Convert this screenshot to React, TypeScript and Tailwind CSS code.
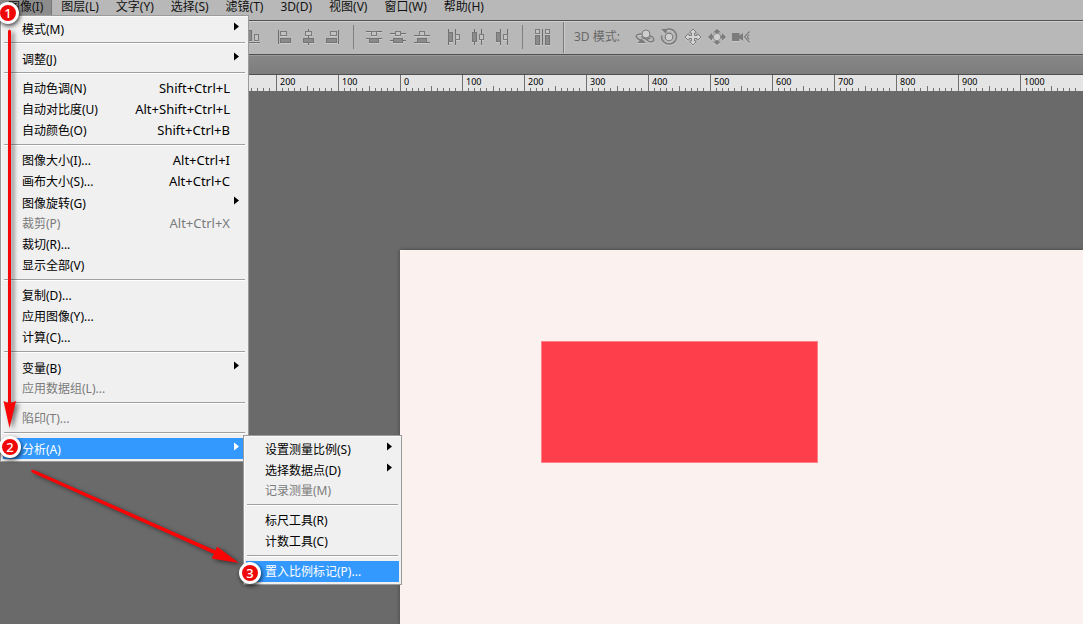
import React from "react";

const FONT = "font-['Noto_Sans','Noto_Sans_CJK_SC',sans-serif]";

type Entry = { label: string; keys?: string; sub?: boolean; off?: boolean; active?: boolean };

const imageMenu: Entry[][] = [
  [{ label: "模式(M)", sub: true }],
  [{ label: "调整(J)", sub: true }],
  [
    { label: "自动色调(N)", keys: "Shift+Ctrl+L" },
    { label: "自动对比度(U)", keys: "Alt+Shift+Ctrl+L" },
    { label: "自动颜色(O)", keys: "Shift+Ctrl+B" },
  ],
  [
    { label: "图像大小(I)...", keys: "Alt+Ctrl+I" },
    { label: "画布大小(S)...", keys: "Alt+Ctrl+C" },
    { label: "图像旋转(G)", sub: true },
    { label: "裁剪(P)", keys: "Alt+Ctrl+X", off: true },
    { label: "裁切(R)..." },
    { label: "显示全部(V)" },
  ],
  [{ label: "复制(D)..." }, { label: "应用图像(Y)..." }, { label: "计算(C)..." }],
  [{ label: "变量(B)", sub: true }, { label: "应用数据组(L)...", off: true }],
  [{ label: "陷印(T)...", off: true }],
  [{ label: "分析(A)", sub: true, active: true }],
];

const analysisMenu: Entry[][] = [
  [
    { label: "设置测量比例(S)", sub: true },
    { label: "选择数据点(D)", sub: true },
    { label: "记录测量(M)", off: true },
  ],
  [{ label: "标尺工具(R)" }, { label: "计数工具(C)" }],
  [{ label: "置入比例标记(P)...", active: true }],
];

function Menu({ groups, name, className }: { groups: Entry[][]; name: string; className: string }) {
  return (
    <div
      role="menu"
      aria-label={name}
      className={`absolute border border-[#9b9b9b] bg-[#f0f0f0] py-0.5 shadow-[inset_1px_1px_0_#fafafa] ${className}`}
    >
      {groups.map((group, g) => (
        <React.Fragment key={g}>
          {g > 0 && <div role="separator" className="mx-[3px] mt-[3px] mb-1 h-0.5 border-t border-[#a0a0a0] bg-white" />}
          {group.map((e) => (
            <button
              key={e.label}
              role="menuitem"
              disabled={e.off}
              className={`flex h-[21px] w-full items-center px-0.5 text-left ${
                e.active ? "text-white" : e.off ? "text-[#7b7b7b]" : "text-black"
              }`}
            >
              <span className={`flex h-full flex-1 items-center pr-[7px] pl-[19px] ${e.active ? "bg-[#3399ff]" : ""}`}>
                <span className={`flex-1 text-[12px] leading-[19px] whitespace-nowrap ${e.sub ? "pt-0.5" : ""}`}>
                  {e.label}
                </span>
                {e.keys && <span className="pr-[9px] text-[13px] leading-[19px] whitespace-nowrap">{e.keys}</span>}
                {e.sub && (
                  <svg className="mb-1 h-[9px] w-[5px]" viewBox="0 0 5 9" fill="currentColor">
                    <path d="M0 0.5 L5 4.5 L0 8.5Z" />
                  </svg>
                )}
              </span>
            </button>
          ))}
        </React.Fragment>
      ))}
    </div>
  );
}

type Rect = [number, number, number, number];

function AlignIcon({ name, hollow, solid, lines }: { name: string; hollow: Rect[]; solid: Rect[]; lines: Rect[] }) {
  return (
    <button aria-label={name} className="size-6 shrink-0">
      <svg viewBox="0 0 24 24" className="size-6 drop-shadow-[0_1px_0_rgba(255,255,255,0.25)]">
        {lines.map(([x, y, w, h], i) => (
          <rect key={i} x={x} y={y} width={w} height={h} fill="#6d6d6d" />
        ))}
        {solid.map(([x, y, w, h], i) => (
          <rect key={i} x={x + 0.5} y={y + 0.5} width={w - 1} height={h - 1} fill="#8b8b8b" stroke="#757575" />
        ))}
        {hollow.map(([x, y, w, h], i) => (
          <rect key={i} x={x + 0.5} y={y + 0.5} width={w - 1} height={h - 1} fill="#c2c2c2" stroke="#7b7b7b" />
        ))}
      </svg>
    </button>
  );
}

function ModeIcon({ name, children }: { name: string; children: React.ReactNode }) {
  return (
    <button aria-label={name} className="size-6 shrink-0">
      <svg
        viewBox="0 0 24 24"
        fill="none"
        stroke="#7c7c7c"
        strokeWidth="1.5"
        className="size-6 drop-shadow-[0_1px_0_rgba(255,255,255,0.25)]"
      >
        {children}
      </svg>
    </button>
  );
}

const Divider = () => <div className="h-6 w-px shrink-0 bg-[#7f7f7f]" />;

function Toolbar() {
  return (
    <div className="flex h-8 items-center overflow-hidden border-t border-[#d2d2d2] bg-[#b8b8b8] pb-px pl-60">
      <AlignIcon name="底对齐" solid={[[8, 5, 4, 11]]} hollow={[[14, 9, 5, 7]]} lines={[[4, 17, 16, 1]]} />
      <div className="ml-2 flex">
        <AlignIcon name="左对齐" lines={[[6, 5, 1, 14]]} hollow={[[8, 6, 7, 5]]} solid={[[8, 13, 11, 5]]} />
        <AlignIcon name="水平居中对齐" lines={[[12, 4, 1, 16]]} hollow={[[9, 6, 7, 5]]} solid={[[7, 13, 11, 5]]} />
        <AlignIcon name="右对齐" lines={[[18, 5, 1, 14]]} hollow={[[10, 6, 7, 5]]} solid={[[6, 13, 11, 5]]} />
      </div>
      <div className="flex items-center pr-2 pl-[9px]">
        <Divider />
      </div>
      <AlignIcon name="按顶分布" lines={[[4, 6, 16, 1], [4, 13, 16, 1]]} hollow={[[9, 6, 6, 5]]} solid={[[7, 13, 10, 5]]} />
      <AlignIcon name="垂直居中分布" lines={[[4, 8, 16, 1], [4, 15, 16, 1]]} hollow={[[9, 6, 6, 5]]} solid={[[7, 13, 10, 5]]} />
      <AlignIcon name="按底分布" lines={[[4, 10, 16, 1], [4, 17, 16, 1]]} hollow={[[9, 6, 6, 5]]} solid={[[7, 13, 10, 5]]} />
      <div className="ml-2 flex">
        <AlignIcon name="按左分布" lines={[[6, 4, 1, 16], [13, 4, 1, 16]]} solid={[[6, 7, 5, 10]]} hollow={[[13, 9, 5, 6]]} />
        <AlignIcon name="水平分布" lines={[[8, 4, 1, 16], [15, 4, 1, 16]]} solid={[[6, 7, 5, 10]]} hollow={[[13, 9, 5, 6]]} />
        <AlignIcon name="按右分布" lines={[[10, 4, 1, 16], [17, 4, 1, 16]]} solid={[[6, 7, 5, 10]]} hollow={[[13, 9, 5, 6]]} />
      </div>
      <div className="flex items-center px-2">
        <Divider />
      </div>
      <AlignIcon
        name="自动对齐图层"
        lines={[[11, 4, 1, 16]]}
        hollow={[[4, 4, 5, 5], [14, 4, 5, 5]]}
        solid={[[4, 10, 5, 10], [14, 10, 5, 10]]}
      />
      <div className="ml-2 h-8 w-0.5 shrink-0 border-l border-[#7a7a7a] bg-[#cccccc]" />
      <span className="w-[68px] shrink-0 pl-[9px] text-[12px] leading-4 whitespace-nowrap text-[#686868]">3D 模式:</span>
      <ModeIcon name="旋转 3D 对象">
        <path d="M9 9 C3.500 8.500 1.500 11.500 5 14 L10 16.500 M13 14.500 C17 18 21.500 17.500 20.500 14 C20 12 17.500 11 16 11 M8.500 11.500 C11 14.500 15.500 15 17.500 12.500" />
        <circle cx="13" cy="9" r="4" fill="#cecece" strokeWidth="1" />
        <path d="M4.500 18 L8.500 13.500 L13 18Z" fill="#7c7c7c" stroke="none" />
      </ModeIcon>
      <ModeIcon name="滚动 3D 对象">
        <path d="M7 6 A7.500 7.500 0 1 1 4.600 10.500" />
        <path d="M4 4 L10.500 4 L9 9Z" fill="#7c7c7c" stroke="none" />
        <circle cx="12" cy="12" r="3.800" fill="#cecece" strokeWidth="1.200" />
      </ModeIcon>
      <ModeIcon name="拖动 3D 对象">
        <path
          d="M12 4 L15 7 V8 H13.500 V10.500 H16 V9 H17 L20 12 L17 15 H16 V13.500 H13.500 V16 H15 V17 L12 20 L9 17 V16 H10.500 V13.500 H8 V15 H7 L4 12 L7 9 H8 V10.500 H10.500 V8 H9 V7Z"
          fill="#d4d4d4"
          strokeWidth="1"
        />
      </ModeIcon>
      <ModeIcon name="滑动 3D 对象">
        <path
          d="M12 4 L16 7.500 H13.500 V10.500 H17 V8 L21 12 L17 16 V13.500 H13.500 V16.500 H16 L12 20 L8 16.500 H10.500 V13.500 H7 V16 L3 12 L7 8 V10.500 H10.500 V7.500 H8Z"
          fill="#7c7c7c"
          stroke="none"
        />
        <circle cx="12" cy="12" r="3.800" fill="#d0d0d0" strokeWidth="0.800" />
      </ModeIcon>
      <ModeIcon name="缩放 3D 对象">
        <path d="M3 8 H10.500 V10.500 L14 8 V16 L10.500 13.500 V16 H3Z" fill="#7c7c7c" stroke="none" />
        <path d="M20.500 6.500 L15.500 12 L20.500 17.500" strokeWidth="1.200" />
        <path d="M20.500 10 C18 10 18 14 20.500 14" strokeWidth="1.200" />
      </ModeIcon>
    </div>
  );
}

const rulerMarks = ["", "200", "100", "0", "100", "200", "300", "400", "500", "600", "700", "800", "900", "1000"];

function Ruler() {
  return (
    <div className="flex h-4 overflow-hidden bg-[#e4e4e4] pl-[214px]">
      {rulerMarks.map((n, i) => (
        <div key={i} className="flex h-4 w-[62px] shrink-0 flex-col border-l border-[#707070]">
          <span className="h-3 pl-[3px] text-[9px] leading-[13px] text-black">{n}</span>
          <svg className="h-1 w-[61px] overflow-visible" viewBox="0 0 61 4" shapeRendering="crispEdges">
            {[6, 12, 18, 24, 31, 37, 43, 49, 55].map((x) => (
              <rect key={x} x={x - 1} y={x === 31 ? -1 : 1} width="1" height={x === 31 ? 5 : 3} fill="#707070" />
            ))}
          </svg>
        </div>
      ))}
    </div>
  );
}

function Badge({ n, className }: { n: number; className: string }) {
  return (
    <div
      className={`absolute flex size-[22px] items-center justify-center rounded-full border-[3px] border-white bg-[#f00808] text-[13px] leading-4 font-medium text-white shadow-[1px_2px_4px_rgba(0,0,0,0.7)] ${className}`}
    >
      {n}
    </div>
  );
}

export default function App() {
  return (
    <div className={`relative flex h-screen flex-col overflow-hidden bg-[#6a6a6a] ${FONT}`}>
      <nav className="flex h-5 shrink-0 items-start gap-px bg-[#b8b8b8] text-[12px] text-[#111]">
        {["图像(I)", "图层(L)", "文字(Y)", "选择(S)", "滤镜(T)", "3D(D)", "视图(V)", "窗口(W)", "帮助(H)"].map((t, i) => (
          <button
            key={t}
            className={`flex h-[15px] shrink-0 items-start px-2 leading-[13px] whitespace-nowrap ${
              i === 0 ? "border-r border-[#777] bg-[#8c8c8c]" : ""
            }`}
          >
            {t}
          </button>
        ))}
      </nav>
      <div className="h-px shrink-0 bg-[#505050]" />
      <div className="shrink-0 bg-[#b8b8b8] pb-px">
        <Toolbar />
      </div>
      <div className="h-px shrink-0 bg-[#505050]" />
      <div className="h-[19px] shrink-0 border-t border-[#999] bg-linear-to-b from-[#878787] to-[#7d7d7d]" />
      <div className="h-px shrink-0 bg-[#505050]" />
      <div className="shrink-0">
        <Ruler />
      </div>
      <main className="flex flex-1 pt-[159px] pl-[400px]">
        <div className="flex-1 bg-[#fbf1ef] pt-[91px] pl-[141px] shadow-[0_0_4px_rgba(0,0,0,0.4)]">
          <div className="h-[122px] w-[277px] border border-[#ff8188] bg-[#ff3e4c]" />
        </div>
      </main>

      <Menu groups={imageMenu} name="图像" className="top-[15px] left-0 w-[249px]" />
      <Menu groups={analysisMenu} name="分析" className="top-[435px] left-[243px] w-[159px]" />

      <svg
        className="pointer-events-none absolute top-0 left-0 h-[624px] w-[260px] drop-shadow-[3px_2px_2px_rgba(0,0,0,0.5)]"
        viewBox="0 0 260 624"
        fill="#fa0505"
      >
        <path d="M8 31 Q9.500 28 11 31 V403 L16 401 L9.500 428 L3.500 401 L8 403Z" />
        <path d="M31 471 Q31 469 34 470 L215.500 550.500 L217 546.500 L239 563 L211.500 558.500 L214 554 L33 473Z" />
      </svg>
      <Badge n={1} className="top-[2px] left-[-3px]" />
      <Badge n={2} className="top-[436px] left-[-1px]" />
      <Badge n={3} className="top-[562px] left-[239px]" />
    </div>
  );
}
